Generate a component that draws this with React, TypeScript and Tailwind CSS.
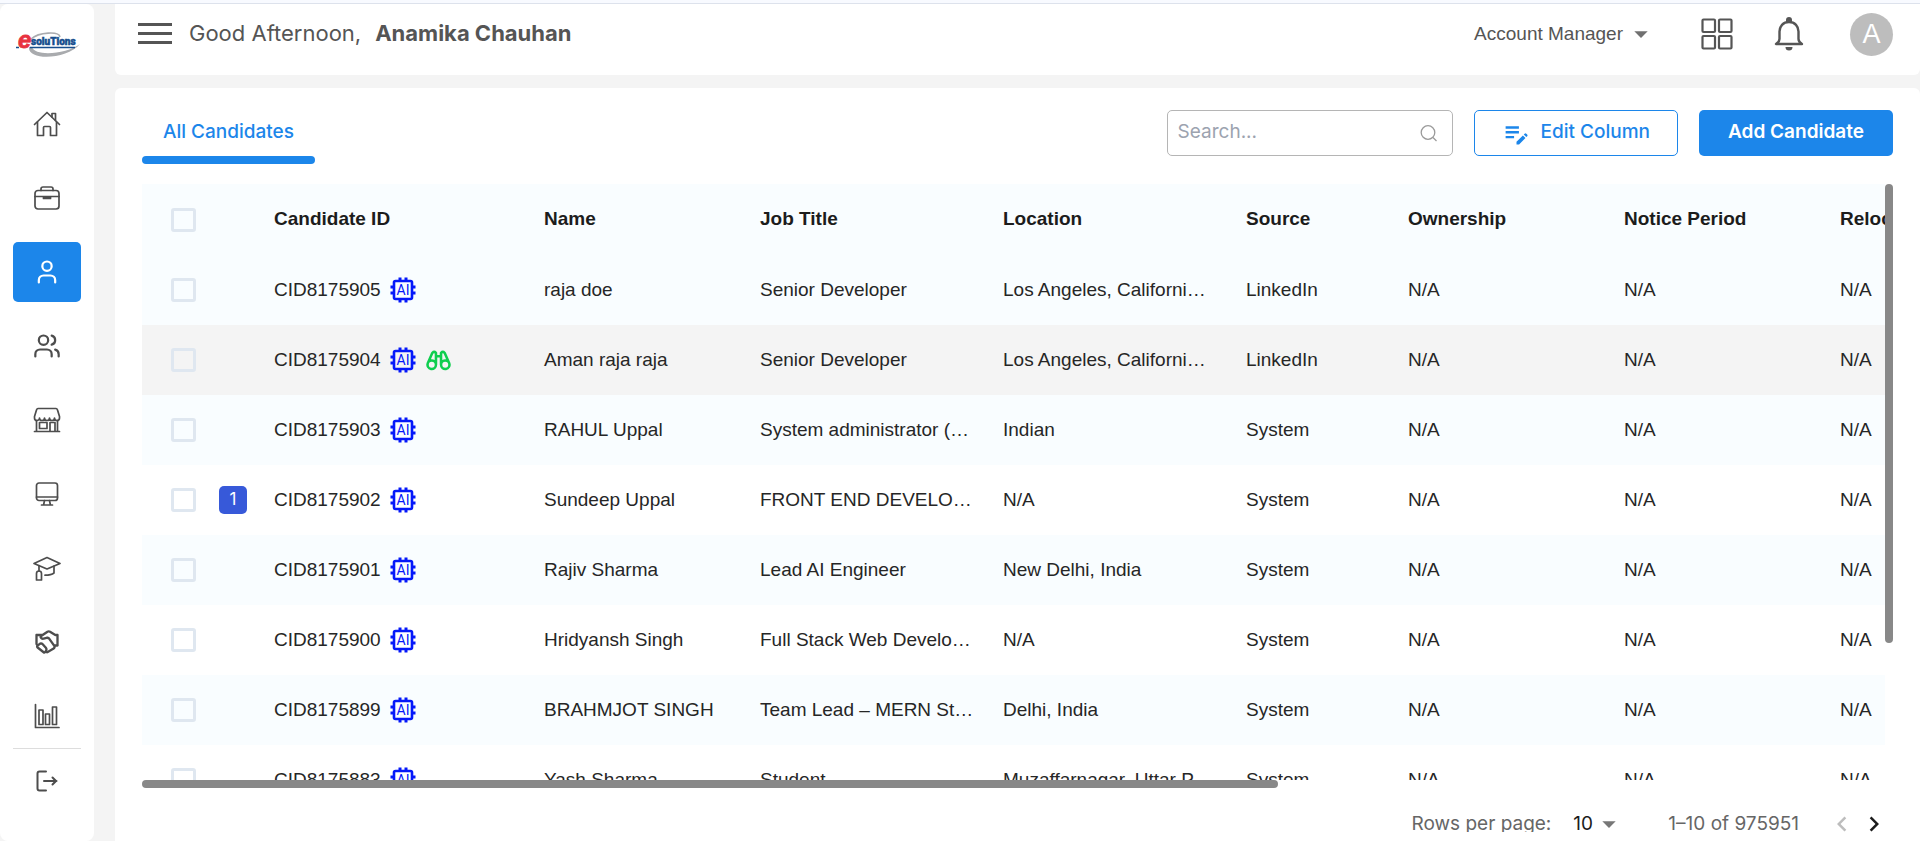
import type { ReactNode } from "react";
import { MdArrowDropDown, MdEditNote, MdKeyboardArrowLeft, MdKeyboardArrowRight } from "react-icons/md";
import { PiBinocularsBold } from "react-icons/pi";
import { RiShakeHandsLine } from "react-icons/ri";
import { LuUser, LuUsers } from "react-icons/lu";

type Candidate = {
  id: string;
  name: string;
  title: string;
  location: string;
  source: string;
  count?: number;
  watched?: boolean;
};

const candidates: Candidate[] = [
  { id: "CID8175905", name: "raja doe", title: "Senior Developer", location: "Los Angeles, Californi…", source: "LinkedIn" },
  { id: "CID8175904", name: "Aman raja raja", title: "Senior Developer", location: "Los Angeles, Californi…", source: "LinkedIn", watched: true },
  { id: "CID8175903", name: "RAHUL Uppal", title: "System administrator (…", location: "Indian", source: "System" },
  { id: "CID8175902", name: "Sundeep Uppal", title: "FRONT END DEVELO…", location: "N/A", source: "System", count: 1 },
  { id: "CID8175901", name: "Rajiv Sharma", title: "Lead AI Engineer", location: "New Delhi, India", source: "System" },
  { id: "CID8175900", name: "Hridyansh Singh", title: "Full Stack Web Develo…", location: "N/A", source: "System" },
  { id: "CID8175899", name: "BRAHMJOT SINGH", title: "Team Lead – MERN St…", location: "Delhi, India", source: "System" },
  { id: "CID8175883", name: "Yash Sharma", title: "Student", location: "Muzaffarnagar, Uttar P…", source: "System" },
];

function LineIcon({ children }: { children: ReactNode }) {
  return (
    <svg width="28" height="28" viewBox="0 0 28 28" fill="none" stroke="currentColor" strokeWidth="1.7" strokeLinecap="round" strokeLinejoin="round" aria-hidden="true">
      {children}
    </svg>
  );
}

const HomeIcon = () => (
  <LineIcon>
    <path d="M1.5 14.5 14 2.5l12.5 12" />
    <path d="M4.5 12v13.5h6v-8a1 1 0 0 1 1-1h5a1 1 0 0 1 1 1v8h6V12" />
    <path d="M19 7V3.5h3.500v7" />
  </LineIcon>
);

const BriefcaseIcon = () => (
  <LineIcon>
    <rect x="2" y="6.5" width="24" height="18.5" rx="3" />
    <path d="M8 6.5V5A2 2 0 0 1 10 3h8a2 2 0 0 1 2 2v1.5M2 12.5h24" />
    <path d="M10.5 13h7v1.500h-7z" fill="currentColor" />
  </LineIcon>
);

const ShopIcon = () => (
  <LineIcon>
    <path d="M5 2.5h18q1 0 1.5 1.5l2 6.5V12a2.5 2.5 0 0 1-5 0 2.5 2.5 0 0 1-5 0 2.5 2.5 0 0 1-5 0 2.5 2.5 0 0 1-5 0 2.5 2.5 0 0 1-5 0v-1.5l2-6.500Q4 2.500 5 2.500z" />
    <path d="M3.500 14.5v11M24.500 14.5v11M1.500 25.5h25M6.500 16.5h7.500v6H6.500zM17 25.5v-9h5v9" />
  </LineIcon>
);

const MonitorIcon = () => (
  <LineIcon>
    <rect x="3.5" y="3" width="21" height="17.5" rx="2.5" />
    <path d="M3.5 17h21M11.5 20.5l-.8 4M16.5 20.5l.8 4M8.5 25h11" />
  </LineIcon>
);

const GraduationIcon = () => (
  <LineIcon>
    <path d="M1 9.5 14 3.5l13 6L14 15z" />
    <path d="M6 11.5V17M21 12v7c-2 1.6-5 2.2-9 2.2" />
    <path d="M3.5 26v-6.500a2.500 2.500 0 0 1 5 0V26z" />
  </LineIcon>
);

const ChartIcon = () => (
  <LineIcon>
    <path d="M2.5 2.5v23H26" />
    <rect x="6" y="8" width="4" height="14.5" />
    <rect x="12.5" y="12" width="4" height="10.5" />
    <rect x="19.5" y="5" width="4" height="17.5" />
  </LineIcon>
);

const LogoutIcon = () => (
  <svg width="28" height="28" viewBox="0 0 28 28" fill="none" stroke="currentColor" strokeWidth="2" strokeLinecap="round" strokeLinejoin="round" aria-hidden="true">
    <path d="M13 4.5H6.500a2 2 0 0 0-2 2v15a2 2 0 0 0 2 2H13M11 14h12.500M19.500 10.500l3.500 3.500-3.500 3.500" />
  </svg>
);

const AiChip = () => (
  <svg width="26" height="26" viewBox="0 0 26 26" role="img" aria-label="AI" className="text-[#0518fa]">
    <path d="M10 .5v4M16 .5v4M10 21.500v4M16 21.500v4M.5 10h4M.5 16h4M21.500 10h4M21.500 16h4" stroke="currentColor" strokeWidth="3" />
    <rect x="4" y="4" width="18" height="18" rx="1.5" fill="none" stroke="currentColor" strokeWidth="2.6" />
    <text x="13" y="18" textAnchor="middle" fontSize="14" fontFamily="Roboto, sans-serif" fill="currentColor">AI</text>
  </svg>
);

const Logo = () => (
  <svg width="68" height="30" viewBox="0 0 68 30" role="img" aria-label="eSolutions">
    <path d="M18 10C26 3 46 2 47 8" fill="none" stroke="#a9abae" strokeWidth="1.6" />
    <path d="M16 18c-2 14 38 13 51-3-13 10-45 13-48 3z" fill="#a9abae" />
    <path d="M3 18.5h3M17 18.500h45" stroke="#164e8e" strokeWidth="1.6" />
    <text x="5" y="19" fontSize="24" fontWeight="700" fontStyle="italic" fontFamily="Liberation Sans, sans-serif" fill="#e8323f" stroke="#e8323f" strokeWidth="0.8">e</text>
    <text x="18" y="16" fontSize="10" fontWeight="900" fontFamily="Roboto, sans-serif" fill="#164e8e" stroke="#164e8e" strokeWidth="0.5">soluTions</text>
  </svg>
);

const navItems: { label: string; icon: ReactNode; active?: boolean }[] = [
  { label: "Home", icon: <HomeIcon /> },
  { label: "Jobs", icon: <BriefcaseIcon /> },
  { label: "Candidates", icon: <LuUser size={28} strokeWidth={1.9} />, active: true },
  { label: "Teams", icon: <LuUsers size={28} strokeWidth={1.9} /> },
  { label: "Vendors", icon: <ShopIcon /> },
  { label: "Workspace", icon: <MonitorIcon /> },
  { label: "Training", icon: <GraduationIcon /> },
  { label: "Partners", icon: <RiShakeHandsLine size={28} /> },
  { label: "Reports", icon: <ChartIcon /> },
];

function Sidebar() {
  return (
    <nav className="flex w-[94px] shrink-0 flex-col items-center rounded-lg bg-white px-[13px] text-[#4d4d4d]">
      <a href="#home" aria-label="eSolutions" className="mt-[25px] mb-[35px]">
        <Logo />
      </a>
      <ul className="flex w-full flex-col gap-[14px]">
        {navItems.map((item) => (
          <li key={item.label}>
            <a
              href={"#" + item.label.toLowerCase()}
              aria-label={item.label}
              className={item.active ? "flex h-[60px] items-center justify-center rounded-[5px] bg-[#1c86ea] text-white" : "flex h-[60px] items-center justify-center"}
            >
              {item.icon}
            </a>
          </li>
        ))}
      </ul>
      <div className="mt-[2px] w-full border-t border-[#dddddd] pt-[18px] text-center">
        <button type="button" aria-label="Log out">
          <LogoutIcon />
        </button>
      </div>
    </nav>
  );
}

function Header() {
  return (
    <header className="flex h-[71px] shrink-0 items-start justify-between rounded-b-md bg-white pr-[27px] pl-[23px] font-['Inter',sans-serif] text-[#555555]">
      <div className="flex h-[58px] items-center">
        <button type="button" aria-label="Toggle menu" className="flex w-[34px] flex-col gap-[6px]">
          <span className="h-[3px] bg-[#555555]" />
          <span className="h-[3px] bg-[#555555]" />
          <span className="h-[3px] bg-[#555555]" />
        </button>
        <p className="ml-[17px] text-[22px]">Good Afternoon,</p>
        <p className="ml-[14px] text-[22px] font-bold">Anamika Chauhan</p>
      </div>
      <div className="flex h-[60px] items-center font-['Liberation_Sans',sans-serif]">
        <button type="button" className="flex items-center text-[19px]">
          Account Manager
          <MdArrowDropDown size={32} className="ml-[2px] text-[#707070]" />
        </button>
        <button type="button" aria-label="Apps" className="ml-[44px]">
          <svg width="32" height="32" viewBox="0 0 32 32" fill="none" stroke="currentColor" strokeWidth="2.2">
            <rect x="1.5" y="1.5" width="12.5" height="12.5" rx="1" />
            <rect x="18" y="1.5" width="12.5" height="12.5" rx="1" />
            <rect x="1.5" y="18" width="12.5" height="12.5" rx="1" />
            <rect x="18" y="18" width="12.5" height="12.5" rx="1" />
          </svg>
        </button>
        <button type="button" aria-label="Notifications" className="ml-[41px]">
          <svg width="30" height="34" viewBox="0 0 30 34" fill="none" stroke="currentColor" strokeWidth="2.4" strokeLinejoin="round">
            <path d="M15 5c-6 0-9.500 4.500-9.500 9.500V22c0 2-1 3.500-3.500 5h26c-2.500-1.500-3.500-3-3.500-5v-7.500C24.500 9.500 21 5 15 5z" />
            <path d="M12 5V3a3 3 0 0 1 6 0v2z" fill="currentColor" stroke="none" />
            <path d="M11.500 30h7a3.500 3.500 0 0 1-7 0z" fill="currentColor" stroke="none" />
          </svg>
        </button>
        <button type="button" aria-label="Account" className="ml-[46px] flex size-[43px] items-center justify-center rounded-full bg-[#bdbdbd] text-[27px] text-white">
          A
        </button>
      </div>
    </header>
  );
}

function Toolbar() {
  return (
    <div className="flex items-start justify-between font-['Inter',sans-serif] text-[19px]">
      <button type="button" role="tab" aria-selected="true" className="flex flex-col font-medium text-[#1c86ea]">
        <span className="flex h-[46px] items-center px-[21px] pb-[2px]">All Candidates</span>
        <span className="h-2 w-full rounded-full bg-[#1c86ea]" />
      </button>
      <div className="flex h-[46px]">
        <label className="flex w-[286px] items-center rounded-[5px] border border-[#b5b5b5] pr-[14px] pl-[10px]">
          <input type="text" placeholder="Search..." aria-label="Search" className="min-w-0 flex-1 pb-[2px] outline-none placeholder:text-[#9ca3af]" />
          <svg width="18" height="18" viewBox="0 0 18 18" fill="none" stroke="#9a9a9a" strokeWidth="1.3" aria-hidden="true">
            <circle cx="8" cy="8.5" r="6.8" />
            <path d="m13 13.5 3.5 3.5" />
          </svg>
        </label>
        <button type="button" className="ml-[21px] flex items-center justify-center gap-[10px] rounded-[5px] border border-[#1c86ea] px-[27px] font-medium text-[#1c86ea]">
          <MdEditNote size={29} />
          <span className="pb-[2px]">Edit Column</span>
        </button>
        <button type="button" className="ml-[21px] rounded-[5px] bg-[#1c86ea] px-[29px] pb-[2px] font-semibold text-white">Add Candidate</button>
      </div>
    </div>
  );
}

const boxClass = "block h-[24px] w-[25px] appearance-none rounded-[3px] border-[3px] border-[#dfe7f0]";

function CandidateTable() {
  return (
    <table className="w-[2080px] table-fixed border-collapse text-left text-[19px] text-[#262626]">
      <colgroup>
        <col className="w-[77px]" />
        <col className="w-[55px]" />
        <col className="w-[270px]" />
        <col className="w-[216px]" />
        <col className="w-[243px]" />
        <col className="w-[243px]" />
        <col className="w-[162px]" />
        <col className="w-[216px]" />
        <col className="w-[216px]" />
        <col />
      </colgroup>
      <thead>
        <tr className="h-[71px] bg-[#f9fdff] whitespace-nowrap text-[#1c1c1c]">
          <th className="pl-[29px]">
            <input type="checkbox" aria-label="Select all candidates" className={boxClass} />
          </th>
          <th />
          <th>Candidate ID</th>
          <th>Name</th>
          <th>Job Title</th>
          <th>Location</th>
          <th>Source</th>
          <th>Ownership</th>
          <th>Notice Period</th>
          <th>Relocation</th>
        </tr>
      </thead>
      <tbody>
        {candidates.map((c) => (
          <tr key={c.id} className={c.watched ? "h-[70px] bg-[#f4f4f4] whitespace-nowrap" : "h-[70px] whitespace-nowrap odd:bg-[#f9fdff]"}>
            <td className="pl-[29px]">
              <input type="checkbox" aria-label={"Select " + c.id} className={boxClass} />
            </td>
            <td>
              {c.count && (
                <span className="flex size-[28px] items-center justify-center rounded-[5px] bg-[#3759d9] font-['Inter',sans-serif] text-[17px] text-white">{c.count}</span>
              )}
            </td>
            <td>
              <div className="flex items-center gap-[9px]">
                {c.id}
                <AiChip />
                {c.watched && <PiBinocularsBold size={27} className="text-[#0fce4e]" />}
              </div>
            </td>
            <td>{c.name}</td>
            <td>{c.title}</td>
            <td>{c.location}</td>
            <td>{c.source}</td>
            <td>N/A</td>
            <td>N/A</td>
            <td>N/A</td>
          </tr>
        ))}
      </tbody>
    </table>
  );
}

function Pagination() {
  return (
    <div className="flex h-[44px] shrink-0 items-start justify-end overflow-hidden pt-[21px] pr-[4px] font-['Inter',sans-serif] text-[19px] text-[#666666]">
      <div className="flex h-[30px] items-center">
        <span id="rows-label">Rows per page:</span>
        <div className="ml-[22px] flex items-center text-[#1c1c1c]">
          <select aria-labelledby="rows-label" className="appearance-none" defaultValue="10">
            <option>10</option>
          </select>
          <MdArrowDropDown size={32} className="text-[#777777]" />
        </div>
        <span className="ml-[43px]">1–10 of 975951</span>
        <button type="button" aria-label="Previous page" className="ml-[28px] text-[#bdbdbd]">
          <MdKeyboardArrowLeft size={30} />
        </button>
        <button type="button" aria-label="Next page" className="ml-[2px] text-[#1c1c1c]">
          <MdKeyboardArrowRight size={30} />
        </button>
      </div>
    </div>
  );
}

export default function App() {
  return (
    <div className="flex h-screen flex-col overflow-hidden bg-[#f4f4f4] font-['Liberation_Sans',Arial,sans-serif]">
      <div className="h-1 shrink-0 border-b border-[#dde2ec] bg-[#f8faff]" />
      <div className="flex min-h-0 flex-1 gap-[21px]">
        <Sidebar />
        <div className="flex min-w-0 flex-1 flex-col gap-[13px]">
          <Header />
          <main className="flex min-h-0 flex-1 flex-col rounded-t-md bg-white px-[27px] pt-[22px] pb-[9px]">
            <Toolbar />
            <div className="mt-[20px] flex min-h-0 flex-1">
              <div className="min-w-0 flex-1 overflow-hidden">
                <CandidateTable />
              </div>
              <div className="w-2">
                <div className="h-[77%] rounded-full bg-[#888888]" />
              </div>
            </div>
            <div className="mr-2 h-2 shrink-0">
              <div className="h-full w-[65.2%] rounded-full bg-[#888888]" />
            </div>
            <Pagination />
          </main>
        </div>
      </div>
    </div>
  );
}
